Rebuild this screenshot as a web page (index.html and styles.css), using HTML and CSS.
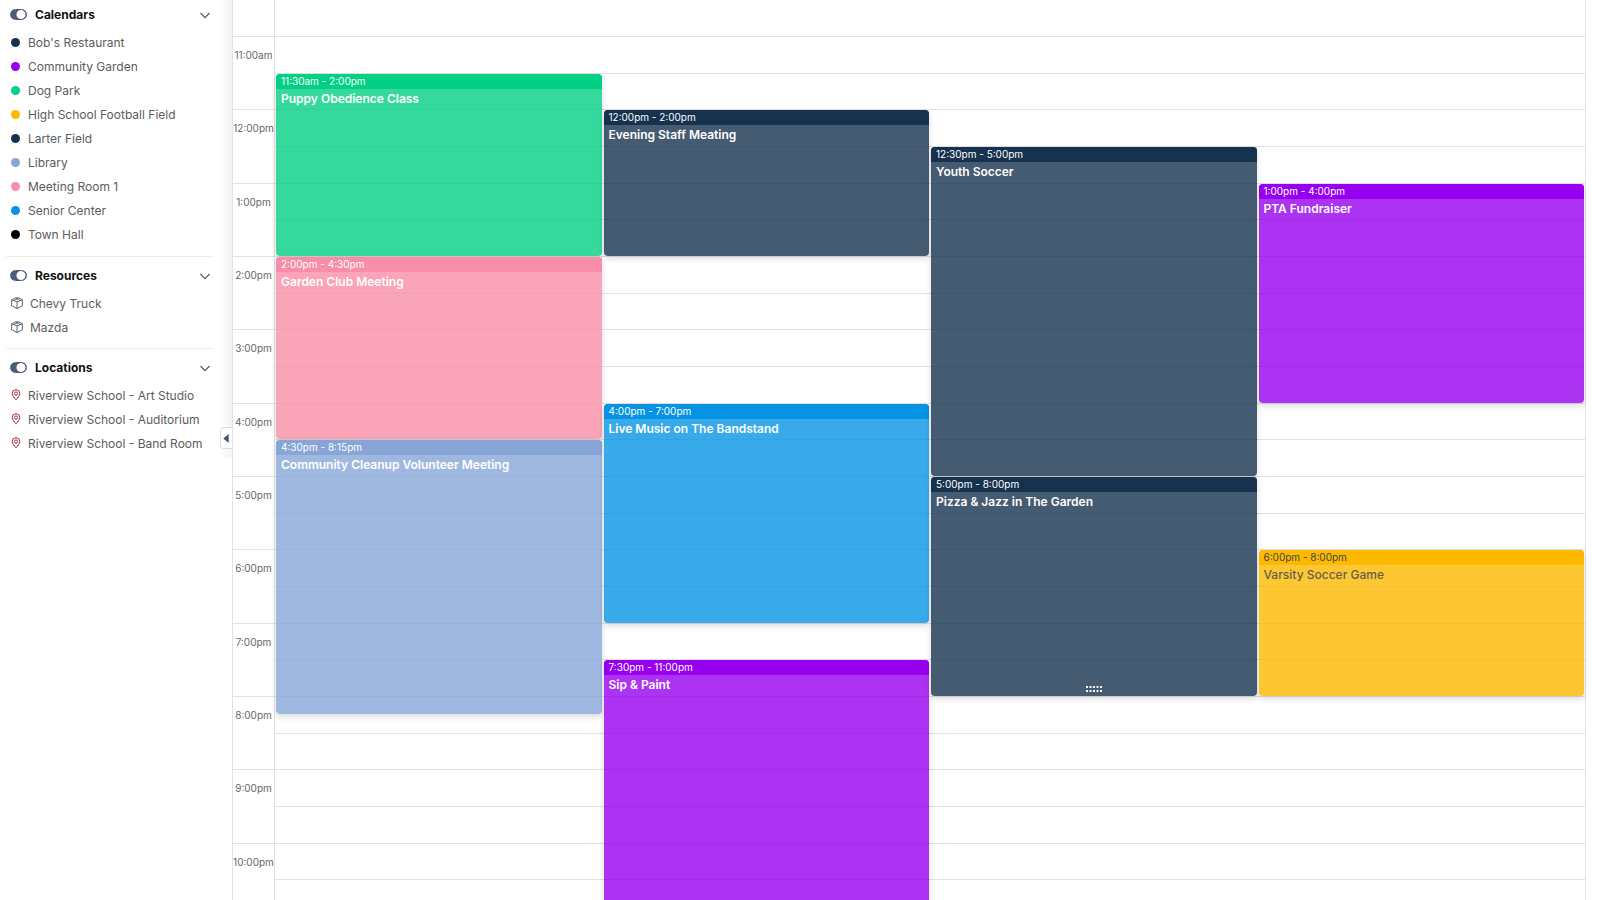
FILE: index.html
```html
<!DOCTYPE html>
<html lang="en">
<head>
<meta charset="utf-8">
<title>Calendar</title>
<link rel="stylesheet" href="styles.css">
</head>
<body>
<svg class="defs" aria-hidden="true">
  <symbol id="chevron" viewBox="0 0 12 12"><path d="M1.500 4 6 8.700l4.500-4.700" fill="none" stroke="#555" stroke-width="1.100"/></symbol>
  <symbol id="box" viewBox="0 0 12 12"><path d="M.6 2.800 4 1h4l3.400 1.800v6L6 11.400.6 8.800zM.6 2.900 6 4.800l5.400-1.900M6 4.800v6.600M2.800 3.600 7 1.200M9.200 3.600 5 1.200" fill="none" stroke="#555" stroke-width=".9" stroke-linejoin="round"/></symbol>
  <symbol id="pin" viewBox="0 0 10 12"><path d="M5 10.800C3.500 8.800 1.200 6.800 1.200 4.500a3.800 3.800 0 0 1 7.600 0c0 2.300-2.300 4.300-3.800 6.300z" fill="none" stroke="#a92a36" stroke-width="1"/><circle cx="5" cy="4.500" r="1.600" fill="none" stroke="#a92a36" stroke-width="1"/></symbol>
</svg>
<div class="app">
  <aside class="sidebar">
    <section class="group">
      <header class="group-head"><label class="group-label"><input type="checkbox" class="switch" checked>Calendars</label><button class="fold" aria-label="Collapse Calendars"><svg><use href="#chevron"/></svg></button></header>
      <ul class="list">
        <li><i class="dot navy"></i>Bob's Restaurant</li>
        <li><i class="dot purple"></i>Community Garden</li>
        <li><i class="dot green"></i>Dog Park</li>
        <li><i class="dot yellow"></i>High School Football Field</li>
        <li><i class="dot navy"></i>Larter Field</li>
        <li><i class="dot steel"></i>Library</li>
        <li><i class="dot pink"></i>Meeting Room 1</li>
        <li><i class="dot blue"></i>Senior Center</li>
        <li><i class="dot black"></i>Town Hall</li>
      </ul>
    </section>
    <section class="group">
      <header class="group-head"><label class="group-label"><input type="checkbox" class="switch" checked>Resources</label><button class="fold" aria-label="Collapse Resources"><svg><use href="#chevron"/></svg></button></header>
      <ul class="list">
        <li><svg class="box"><use href="#box"/></svg>Chevy Truck</li>
        <li><svg class="box"><use href="#box"/></svg>Mazda</li>
      </ul>
    </section>
    <section class="group">
      <header class="group-head"><label class="group-label"><input type="checkbox" class="switch" checked>Locations</label><button class="fold" aria-label="Collapse Locations"><svg><use href="#chevron"/></svg></button></header>
      <ul class="list">
        <li><svg class="pin"><use href="#pin"/></svg>Riverview School - Art Studio</li>
        <li><svg class="pin"><use href="#pin"/></svg>Riverview School - Auditorium</li>
        <li><svg class="pin"><use href="#pin"/></svg>Riverview School - Band Room</li>
      </ul>
    </section>
    <div class="edge"></div>
    <button class="collapse" aria-label="Hide sidebar"><svg viewBox="0 0 6 10"><path d="M6 0v10L0 5z" fill="#44546f"/></svg></button>
  </aside>
  <main class="schedule">
    <div class="hours">
      <div class="lead"></div>
      <div class="hour">11:00am</div><div class="hour">12:00pm</div><div class="hour">1:00pm</div><div class="hour">2:00pm</div><div class="hour">3:00pm</div><div class="hour">4:00pm</div><div class="hour">5:00pm</div><div class="hour">6:00pm</div><div class="hour">7:00pm</div><div class="hour">8:00pm</div><div class="hour">9:00pm</div><div class="hour">10:00pm</div>
    </div>
    <div class="day">
      <div class="lead"></div>
      <div class="slots">
        <div></div><div></div><div></div><div></div><div></div><div></div><div></div><div></div><div></div><div></div><div></div><div></div>
        <div></div><div></div><div></div><div></div><div></div><div></div><div></div><div></div><div></div><div></div><div></div><div></div>
      </div>
      <div class="events">
        <article class="event green puppy"><time>11:30am - 2:00pm</time><h3>Puppy Obedience Class</h3></article>
        <article class="event pink club"><time>2:00pm - 4:30pm</time><h3>Garden Club Meeting</h3></article>
        <article class="event steel cleanup"><time>4:30pm - 8:15pm</time><h3>Community Cleanup Volunteer Meeting</h3></article>
        <article class="event navy staff"><time>12:00pm - 2:00pm</time><h3>Evening Staff Meating</h3></article>
        <article class="event blue music"><time>4:00pm - 7:00pm</time><h3>Live Music on The Bandstand</h3></article>
        <article class="event purple paint"><time>7:30pm - 11:00pm</time><h3>Sip &amp; Paint</h3></article>
        <article class="event navy soccer"><time>12:30pm - 5:00pm</time><h3>Youth Soccer</h3></article>
        <article class="event navy jazz"><time>5:00pm - 8:00pm</time><h3>Pizza &amp; Jazz in The Garden</h3><svg class="grip" viewBox="0 0 16 6"><path d="M0 1h16M0 5h16" stroke="#fff" stroke-width="2" stroke-dasharray="2 1.500"/></svg></article>
        <article class="event purple pta"><time>1:00pm - 4:00pm</time><h3>PTA Fundraiser</h3></article>
        <article class="event yellow varsity"><time>6:00pm - 8:00pm</time><h3>Varsity Soccer Game</h3></article>
      </div>
    </div>
  </main>
</div>
</body>
</html>
```
FILE: styles.css
```css
* { box-sizing: border-box; }
body { margin: 0; font-family: Inter, "Liberation Sans", sans-serif; background: #fff; color: #5c5c5c; }
.defs { position: absolute; width: 0; height: 0; }
.app { display: flex; height: 100vh; overflow: hidden; }

.navy { --c: 22 50 78; }
.purple { --c: 151 0 238; }
.green { --c: 2 208 132; }
.yellow { --c: 252 185 0; }
.steel { --c: 135 166 215; }
.pink { --c: 247 141 167; }
.blue { --c: 6 147 227; }
.black { --c: 0 0 0; }

.sidebar { position: relative; flex: none; width: 232px; padding: 0 18px 0 6px; }
.group { padding: 6px 0 9px; border-bottom: 1px solid #ececec; }
.group:first-child { padding: 2px 0 10px; }
.group:last-of-type { border-bottom: 0; }
.group-head { display: flex; align-items: center; justify-content: space-between; height: 25px; padding: 0 3px 0 4px; }
.group-label { display: flex; align-items: center; gap: 8px; font-size: 12px; font-weight: 700; color: #111; }
.switch { appearance: none; width: 17px; height: 11px; margin: 0; border: 1px solid #4d5b7c; border-radius: 6px; background: radial-gradient(circle at 10px 50%, #fff 4px, #4d5b7c 5px); }
.fold { display: flex; padding: 0; border: 0; background: none; }
.fold svg { width: 12px; height: 12px; }
.list { margin: 0; padding: 3px 0 0; list-style: none; }
.list li { display: flex; align-items: center; height: 24px; padding-left: 5px; font-size: 12px; white-space: nowrap; }
.dot { width: 9px; height: 9px; margin-right: 8px; border-radius: 50%; background: rgb(var(--c)); }
.box { flex: none; width: 12px; height: 12px; margin-right: 7px; }
.pin { flex: none; width: 10px; height: 12px; margin-right: 7px; }
.edge { position: absolute; top: 0; right: 0; width: 12px; height: 458px; background: linear-gradient(to right, #fff, #f3f3f3); }
.collapse { position: absolute; top: 427px; right: 0; display: flex; align-items: center; justify-content: flex-end; width: 12px; height: 22px; padding: 0 3px 0 0; border: 1px solid #ddd; border-right: 0; border-radius: 4px 0 0 4px; background: #fff; }
.collapse svg { width: 6px; height: 9px; }

.schedule { display: flex; flex: 1; align-items: flex-start; margin-right: 14px; border: 1px solid #e2e2e2; border-width: 0 1px; }
.lead { height: 36px; }
.hours { display: grid; grid-template-rows: 36px repeat(12, 1fr); flex: none; width: 41px; height: 916px; }
.hour { padding-top: 10px; border-top: 1px solid #e2e2e2; font-size: 10px; line-height: 16px; text-align: center; color: #666; }
.day { display: grid; grid-template-rows: 36px 880px; flex: 1; border-left: 1px solid #e2e2e2; }
.slots { display: grid; grid-area: 2 / 1; grid-template-rows: repeat(24, 1fr); }
.slots div { border-top: 1px solid #e2e2e2; }
.events { display: grid; grid-area: 2 / 1; grid-template: repeat(48, 1fr) / repeat(4, 1fr); column-gap: 2px; margin: 1px 0 -1px; padding: 0 1px; z-index: 1; }
.event { position: relative; min-height: 0; margin-bottom: 1px; overflow: hidden; border-radius: 4px; background: rgb(var(--c) / .8); box-shadow: 0 3px 6px rgb(0 0 0 / .14); color: #fff; }
.event time { display: block; padding: 0 5px; font-size: 10px; line-height: 15px; background: rgb(var(--c)); }
.event h3 { margin: 0; padding: 1px 5px; font-size: 12px; font-weight: 600; line-height: 17px; }
.event.yellow { color: #444; }
.event.yellow h3 { font-weight: 500; color: #665e4a; }
.puppy { grid-area: 3 / 1 / 13; }
.club { grid-area: 13 / 1 / 23; }
.cleanup { grid-area: 23 / 1 / 38; }
.staff { grid-area: 5 / 2 / 13; }
.music { grid-area: 21 / 2 / 33; }
.paint { grid-area: 35 / 2 / 49; }
.soccer { grid-area: 7 / 3 / 25; }
.jazz { grid-area: 25 / 3 / 37; }
.pta { grid-area: 9 / 4 / 21; }
.varsity { grid-area: 29 / 4 / 37; }
.grip { position: absolute; bottom: 4px; left: 50%; width: 16px; height: 6px; margin-left: -8px; }
```
